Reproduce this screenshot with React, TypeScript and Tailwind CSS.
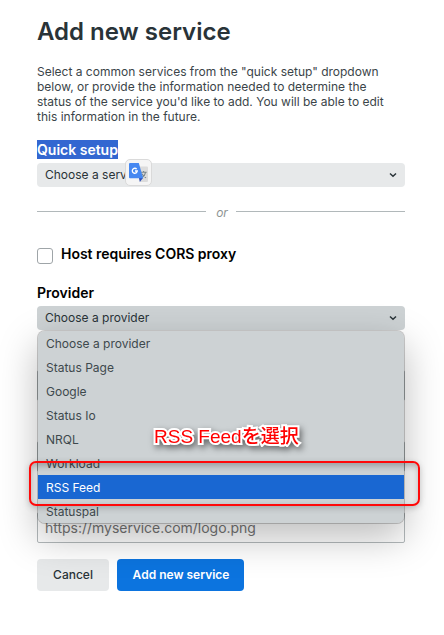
import React from "react";

const options = [
  "Choose a provider",
  "Status Page",
  "Google",
  "Status Io",
  "NRQL",
  "Workload",
  "RSS Feed",
  "Statuspal",
];

function Chevron() {
  return (
    <svg width="8" height="6" viewBox="0 0 8 6" fill="none" stroke="#293338" strokeWidth="1.5">
      <path d="M1 1.5 L4 4.2 L7 1.5" />
    </svg>
  );
}

function TranslateBadge() {
  return (
    <div className="absolute left-[88px] top-[-4px] flex h-[27px] w-[27px] items-center justify-center rounded-[5px] border border-[#dadada] bg-[#f5f5f5]">
      <svg width="20" height="20" viewBox="0 0 20 20">
        <path d="M7 3.500h11a1 1 0 0 1 1 1v13.500a1 1 0 0 1-1 1h-7z" fill="#dcdcdc" />
        <path d="M11.500 9.300h6.200M14.600 8v1.300M16.600 9.300c-.5 2.400-1.800 4-3.600 5.200M13 10.800c.9 1.900 2.200 3 4 4" stroke="#7b878c" strokeWidth="1.100" fill="none" />
        <path d="M10 15h4l-3.200 4z" fill="#3050b8" />
        <path d="M1 0h8.800l4.400 15.300H1a1 1 0 0 1-1-1V1a1 1 0 0 1 1-1z" fill="#4688f1" />
        <path d="M7.700 6.100A2.500 2.500 0 1 0 8.300 8H6" stroke="#fff" strokeWidth="1.300" fill="none" />
      </svg>
    </div>
  );
}

export default function App() {
  return (
    <main className="relative h-[635px] w-[444px] overflow-hidden bg-white pl-[37px] pt-[16px] font-['Inter','Liberation_Sans',sans-serif] text-[#293338]">
      <h1 className="h-[32px] whitespace-nowrap text-[24px] font-semibold leading-[32px]">Add new service</h1>
      <p className="mt-[16px] whitespace-nowrap text-[12px] leading-[15px] text-[#3b4549]">
        Select a common services from the "quick setup" dropdown
        <br />
        below, or provide the information needed to determine the
        <br />
        status of the service you'd like to add. You will be able to edit
        <br />
        this information in the future.
      </p>

      <div className="mt-[16px] flex h-[19px]">
        <span className="whitespace-nowrap bg-[#3367d1] text-[14px] font-semibold leading-[19px] text-white">Quick setup</span>
      </div>
      <div className="relative mt-[4px] flex h-[24px] w-[368px] items-center justify-between rounded-[4px] bg-[#e7e9ea] pl-[8px] pr-[8px] text-[12px]">
        <span>Choose a service</span>
        <Chevron />
        <TranslateBadge />
      </div>

      <div className="mt-[16px] flex h-[17px] w-[368px] items-center">
        <div className="h-px flex-1 bg-[#b1b8ba]" />
        <span className="w-[30px] pt-[2px] pl-[2px] text-center text-[12px] italic text-[#8e9494]">or</span>
        <div className="h-px flex-1 bg-[#b1b8ba]" />
      </div>

      <div className="mt-[25px] flex h-[19px] items-start gap-2">
        <div className="mt-[3px] h-[16px] w-[16px] rounded-[3px] border border-[#9fa5a8] bg-white" />
        <span className="whitespace-nowrap text-[14px] font-semibold leading-[18px] tracking-[-0.02px] text-black">Host requires CORS proxy</span>
      </div>

      <div className="mt-[20px] h-[18px] text-[14px] font-semibold leading-[18px] text-black">Provider</div>
      <div className="relative mt-[4px] h-[24px] w-[368px]">
        <div className="flex h-[24px] items-center justify-between rounded-[4px] bg-[#cdd2d4] px-[8px] text-[12px]">
          <span>Choose a provider</span>
          <Chevron />
        </div>
        <div className="absolute left-0 top-[24px] z-10 h-[194px] w-[368px] rounded-[8px] border border-black/20 bg-[#cdd2d4] bg-clip-padding text-[12px] shadow-[0_14px_38px_rgba(0,0,0,0.26)]">
          {options.map((name) => (
            <div
              key={name}
              className={
                name === "RSS Feed"
                  ? "flex h-[24px] items-center bg-[#1967d2] pl-[8px] pt-[2px] text-white"
                  : "flex h-[24px] items-center pl-[8px] pt-[2px] text-[#3e494d]"
              }
            >
              {name}
            </div>
          ))}
        </div>
      </div>

      <div className="mt-[40px] h-[31px] w-[368px] rounded-[2px] border border-[#b4babc]" />
      <div className="mt-[40px] h-[31px] w-[368px] rounded-[2px] border border-[#b4babc]" />
      <div className="mt-[40px] flex h-[31px] w-[368px] items-center rounded-[2px] border border-[#b4babc] pl-[7px] text-[14px] tracking-[-0.02px] text-[#757575]">
        https://myservice.com/logo.png
      </div>

      <div className="mt-[16px] flex gap-[8px] text-[12px]">
        <button className="h-[32px] w-[72px] rounded-[4px] bg-[#e7e9ea] font-medium">Cancel</button>
        <button className="h-[32px] w-[127px] whitespace-nowrap rounded-[4px] bg-[#0c74df] pl-px font-semibold text-white">Add new service</button>
      </div>

      <div className="absolute left-[29px] top-[461px] z-20 h-[45px] w-[391px] rounded-[7px] border-2 border-[#ff0909] shadow-[0_2px_6px_rgba(0,0,0,0.2),inset_0_3px_6px_rgba(0,0,0,0.25)]" />
      <div className="absolute left-[154px] top-[425px] z-20 whitespace-nowrap font-['Liberation_Sans','Noto_Sans_CJK_JP',sans-serif] text-[19px] leading-[24px] text-[#ff0000] [paint-order:stroke_fill] [-webkit-text-stroke:4px_white] [filter:drop-shadow(2px_3px_3px_rgba(0,0,0,0.5))]">
        RSS Feed<span className="font-medium">を選択</span>
      </div>
    </main>
  );
}
